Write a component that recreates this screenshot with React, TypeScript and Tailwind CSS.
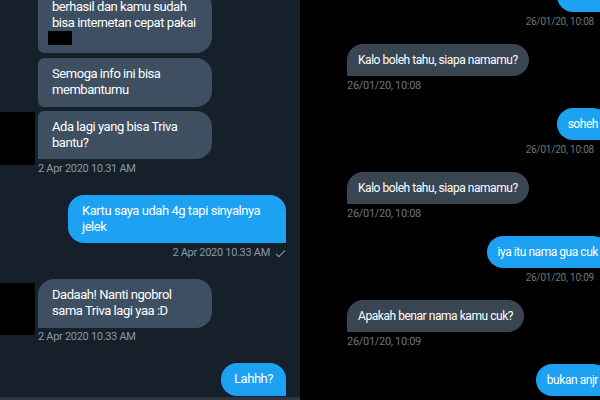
import React from "react";

function Check({ className }: { className?: string }) {
  return (
    <svg viewBox="0 0 12 10" className={className} fill="none" stroke="currentColor" strokeWidth="1.2">
      <path d="M1 5.5 L4.2 8.6 L11 1.4" />
    </svg>
  );
}

function LeftTime({ text, check, className }: { text: string; check?: boolean; className?: string }) {
  return (
    <div className={"flex items-center gap-[5px] text-[11px] leading-[14px] tracking-[-0.3px] text-[#8899a6] " + (className || "")}>
      <span>{text}</span>
      {check && <Check className="w-[11px] h-[9px]" />}
    </div>
  );
}

function RightTime({ text, sent }: { text: string; sent?: boolean }) {
  return (
    <div
      className={
        "flex items-center gap-[5px] mt-[3px] leading-[14px] text-[#6e767d] " +
        (sent ? "text-[10px] tracking-[-0.2px]" : "text-[11px] tracking-[-0.3px]")
      }
    >
      <span>{text}</span>
      {sent && <Check className="w-[10px] h-[8px]" />}
    </div>
  );
}

function Lines({ lines }: { lines: string[] }) {
  return (
    <>
      {lines.map((l) => (
        <div key={l} className="whitespace-nowrap">
          {l}
        </div>
      ))}
    </>
  );
}

function LeftPanel() {
  return (
    <div className="w-[300px] h-[400px] shrink-0 bg-[#15202b] overflow-hidden flex flex-col text-[13px] leading-4 tracking-[-0.45px] text-white">
      {/* group 1 */}
      <div className="flex items-end">
        <div className="w-[38px] shrink-0">
          <div className="w-[35px] h-[53px] bg-black mb-[11px]" />
        </div>
        <div className="flex flex-col items-start -mt-[9px]">
          <div className="w-[174px] bg-[#3d4f61] rounded-r-2xl rounded-l-[6px] px-[14px] pt-2 pb-2">
            <Lines lines={["berhasil dan kamu sudah", "bisa internetan cepat pakai"]} />
            <div className="w-[24px] h-[14px] bg-black -ml-[4px]" />
          </div>
          <div className="w-[174px] mt-[5px] bg-[#3d4f61] rounded-r-2xl rounded-l-[6px] px-[14px] pt-2 pb-[9px]">
            <Lines lines={["Semoga info ini bisa", "membantumu"]} />
          </div>
          <div className="w-[174px] mt-[4px] bg-[#3d4f61] rounded-r-2xl rounded-tl-[6px] rounded-bl-none px-[14px] pt-2 pb-2">
            <Lines lines={["Ada lagi yang bisa Triva", "bantu?"]} />
          </div>
          <LeftTime text="2 Apr 2020 10.31 AM" className="mt-[3px]" />
        </div>
      </div>

      {/* sent 1 */}
      <div className="flex flex-col items-end pr-[14px] mt-[19px]">
        <div className="w-[218px] bg-[#1da1f2] rounded-2xl rounded-br-none px-[14px] py-2">
          <Lines lines={["Kartu saya udah 4g tapi sinyalnya", "jelek"]} />
        </div>
        <LeftTime text="2 Apr 2020 10.33 AM" check className="mt-[3px]" />
      </div>

      {/* group 2 */}
      <div className="flex items-end mt-[19px]">
        <div className="w-[38px] shrink-0">
          <div className="w-[35px] h-[52px] bg-black mb-[9px]" />
        </div>
        <div className="flex flex-col items-start">
          <div className="w-[174px] bg-[#3d4f61] rounded-r-2xl rounded-tl-2xl rounded-bl-none px-[14px] pt-2 pb-[9px]">
            <Lines lines={["Dadaah! Nanti ngobrol", "sama Triva lagi yaa :D"]} />
          </div>
          <LeftTime text="2 Apr 2020 10.33 AM" className="mt-[2px]" />
        </div>
      </div>

      {/* sent 2 */}
      <div className="flex flex-col items-end pr-[14px] mt-[19px]">
        <div className="bg-[#1da1f2] rounded-2xl rounded-br-none px-[13px] pt-2 pb-[9px]">Lahhh?</div>
      </div>

      <div className="mt-auto h-[3px] shrink-0 bg-[#2c3741]" />
    </div>
  );
}

function Received({ text, time }: { text: string; time: string }) {
  return (
    <div className="flex flex-col items-start mt-[15px]">
      <div className="bg-[#3a4552] rounded-2xl rounded-bl-none px-[11px] py-2 whitespace-nowrap">{text}</div>
      <RightTime text={time} />
    </div>
  );
}

function Sent({ text, time, className }: { text: string; time?: string; className?: string }) {
  return (
    <div className={"flex flex-col items-end " + (className || "mt-[15px]")}>
      <div className="bg-[#1da1f2] rounded-2xl rounded-br-none px-[11px] py-2 whitespace-nowrap">{text}</div>
      {time && <RightTime text={time} sent />}
    </div>
  );
}

function RightPanel() {
  return (
    <div className="w-[300px] h-[400px] shrink-0 bg-black overflow-hidden">
      <div className="w-[309px] pl-[47px] flex flex-col text-[12px] leading-4 tracking-[-0.45px] text-white">
        <Sent text="soheh" time="26/01/20, 10:08" className="-mt-[20px]" />
        <Received text="Kalo boleh tahu, siapa namamu?" time="26/01/20, 10:08" />
        <Sent text="soheh" time="26/01/20, 10:08" />
        <Received text="Kalo boleh tahu, siapa namamu?" time="26/01/20, 10:08" />
        <Sent text="iya itu nama gua cuk" time="26/01/20, 10:09" />
        <Received text="Apakah benar nama kamu cuk?" time="26/01/20, 10:09" />
        <Sent text="bukan anjr" />
      </div>
    </div>
  );
}

export default function App() {
  return (
    <div className="w-[600px] h-[400px] flex overflow-hidden [font-family:Roboto,sans-serif]">
      <LeftPanel />
      <RightPanel />
    </div>
  );
}
